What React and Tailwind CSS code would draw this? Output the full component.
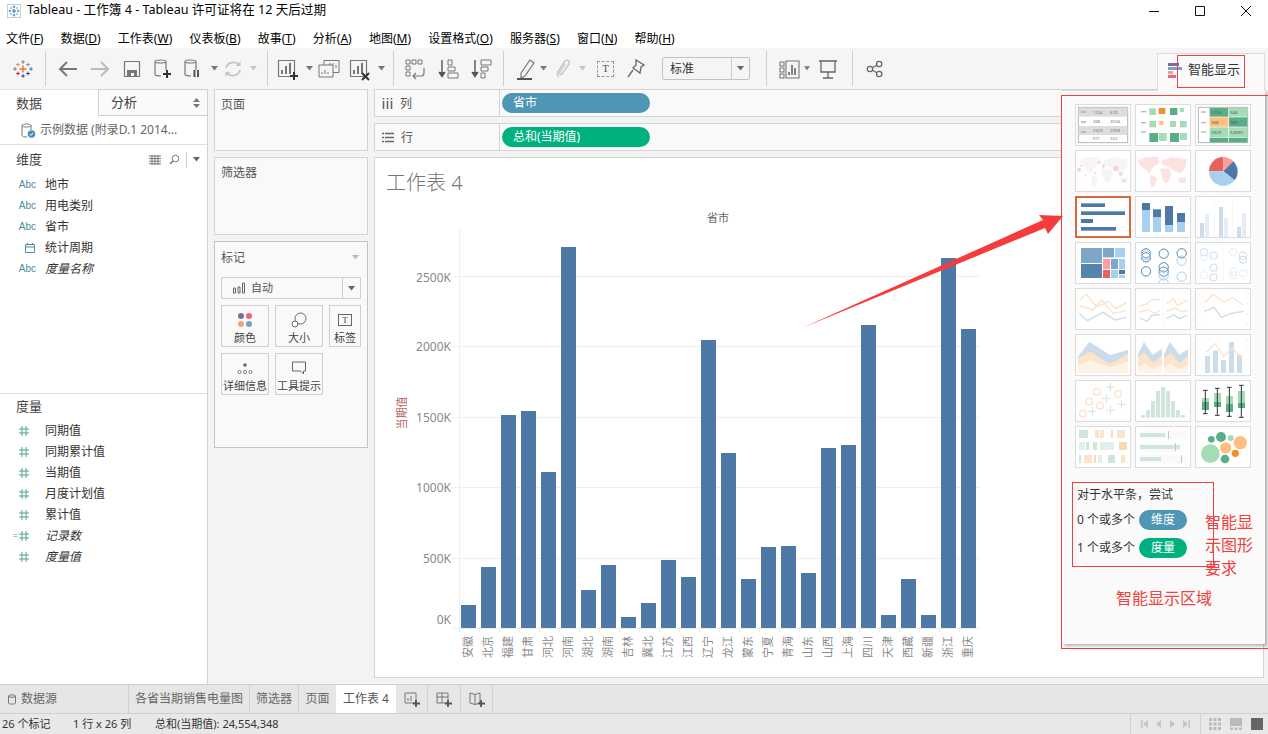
import React from 'react';

const MENUS = [['文件', 'F'], ['数据', 'D'], ['工作表', 'W'], ['仪表板', 'B'], ['故事', 'T'], ['分析', 'A'], ['地图', 'M'], ['设置格式', 'O'], ['服务器', 'S'], ['窗口', 'N'], ['帮助', 'H']];
const DIMS = [['abc', '地市'], ['abc', '用电类别'], ['abc', '省市'], ['cal', '统计周期'], ['abc', '度量名称', true]];
const MEAS = [['同期值'], ['同期累计值'], ['当期值'], ['月度计划值'], ['累计值'], ['记录数', true, true], ['度量值', true]];
const BARS = [['安徽', 605], ['北京', 567], ['福建', 415], ['甘肃', 411], ['河北', 472], ['河南', 247], ['湖北', 590], ['湖南', 565], ['吉林', 617], ['冀北', 603], ['江苏', 560], ['江西', 577], ['辽宁', 340], ['龙江', 453], ['蒙东', 579], ['宁夏', 547], ['青海', 546], ['山东', 573], ['山西', 448], ['上海', 445], ['四川', 325], ['天津', 615], ['西藏', 579], ['新疆', 615], ['浙江', 258], ['重庆', 329]];
const TICKS = [['2500K', 276, 278], ['2000K', 346, 347], ['1500K', 417, 418], ['1000K', 487, 488], ['500K', 558, 559], ['0K', 628, 620]];

const BLUE = '#4e79a7', SKY = '#a7cfef', DK = '#59ae8a', LT = '#a3dcb5', OR = '#ffbf7f', PO = '#fde3c9', PB = '#cddcea', PG = '#cfe6da';

const Rect = ({ r, f }) => <rect x={r[0]} y={r[1]} width={r[2] - r[0]} height={r[3] - r[1]} fill={f} />;
const Line = ({ p, c, w = 4 }) => <polyline points={p} fill="none" stroke={c} strokeWidth={w} />;
const World = ({ f, x = 0 }) => (
  <g fill={f} transform={`translate(${x},0)`}>
    <polygon points="58,482 80,472 118,470 122,488 100,505 92,522 78,508 64,496" />
    <polygon points="94,524 116,534 108,556 98,566 95,545" />
    <polygon points="128,482 160,472 205,478 200,505 185,520 165,512 150,500 132,495" />
    <polygon points="124,505 152,506 158,522 148,548 136,548 128,526" />
    <polygon points="178,534 200,532 204,548 184,550" />
  </g>
);

// drawn in the 3x crop's pixels, so the numbers read straight off the reference
const THUMBS = [
  <g key="0">
    <rect x="55" y="322" width="148" height="106" fill="#fff" stroke="#b5b5b5" strokeWidth="3" />
    <Rect r={[56, 323, 202, 350]} f="#dddddd" /><Rect r={[56, 378, 202, 405]} f="#dddddd" />
    <g fill="#a8a8a8"><rect x="63" y="334" width="15" height="4" /><rect x="63" y="364" width="15" height="4" /><rect x="63" y="394" width="15" height="4" /></g>
    <g fontSize="13" fill="#777"><text x="98" y="343">1234</text><text x="150" y="343">678</text><text x="98" y="370">368</text><text x="150" y="370">3034</text><text x="98" y="397">2929</text><text x="150" y="397">2958</text><text x="98" y="420">971</text><text x="150" y="420">322</text></g>
  </g>,
  <g key="1">
    <g fill="#b5b5b5"><rect x="243" y="333" width="15" height="4" /><rect x="243" y="366" width="15" height="4" /><rect x="243" y="394" width="15" height="4" /></g>
    <Rect r={[268, 325, 288, 345]} f={LT} /><Rect r={[296, 324, 316, 342]} f="#f28e2b" /><Rect r={[330, 324, 352, 345]} f={DK} /><Rect r={[360, 324, 372, 336]} f={LT} />
    <Rect r={[268, 363, 288, 382]} f={LT} /><Rect r={[298, 363, 310, 375]} f={OR} /><Rect r={[330, 363, 348, 381]} f={LT} /><Rect r={[360, 363, 380, 382]} f={LT} />
    <Rect r={[268, 399, 294, 426]} f={DK} /><Rect r={[297, 399, 320, 423]} f={LT} /><Rect r={[330, 399, 357, 426]} f={DK} /><Rect r={[360, 399, 381, 420]} f={LT} />
  </g>,
  <g key="2">
    <rect x="415" y="322" width="148" height="106" fill="#fff" stroke="#b5b5b5" strokeWidth="3" />
    <g fill="#b5b5b5"><rect x="423" y="334" width="15" height="4" /><rect x="423" y="366" width="15" height="4" /><rect x="423" y="394" width="15" height="4" /></g>
    <Rect r={[449, 324, 505, 350]} f={DK} /><Rect r={[507, 324, 562, 350]} f={LT} /><Rect r={[449, 352, 505, 380]} f={OR} /><Rect r={[507, 352, 562, 380]} f={DK} />
    <Rect r={[449, 382, 505, 411]} f={LT} /><Rect r={[507, 382, 562, 411]} f={LT} /><Rect r={[449, 413, 505, 427]} f={DK} /><Rect r={[507, 413, 562, 427]} f={DK} />
    <g fontSize="13" fill="#555"><text x="453" y="342">1234</text><text x="511" y="342">546</text><text x="453" y="371">368</text><text x="511" y="371">380</text><text x="453" y="401">2929</text><text x="511" y="401">52690</text></g>
  </g>,
  <g key="3">
    <World f="#f5f5f5" />
    <g fill="#f7d3d3"><circle cx="57" cy="509" r="6" /><circle cx="130" cy="498" r="5" /><circle cx="167" cy="505" r="8" /><circle cx="182" cy="522" r="6" /><circle cx="118" cy="487" r="4" /><circle cx="76" cy="527" r="3" /><circle cx="192" cy="542" r="4" /><circle cx="62" cy="497" r="3" /><circle cx="105" cy="520" r="3" /></g>
  </g>,
  <g key="4"><World f="#fde2e2" x="176" /></g>,
  <g key="5">
    <path d="M490 514 L447 514 A43 43 0 0 1 490 471 Z" fill="#e4635a" />
    <path d="M490 514 L490 471 A43 43 0 0 1 520 484 Z" fill="#ff9d9a" />
    <path d="M490 514 L520 484 A43 43 0 0 1 524 541 Z" fill={BLUE} />
    <path d="M490 514 L524 541 A43 43 0 0 1 447 514 Z" fill={SKY} />
  </g>,
  <g key="6" fill={BLUE}><rect x="63" y="610" width="72" height="11" /><rect x="63" y="634" width="132" height="11" /><rect x="63" y="657" width="36" height="12" /><rect x="63" y="681" width="105" height="11" /></g>,
  <g key="7">
    <Rect r={[246, 609, 270, 630]} f={BLUE} /><Rect r={[246, 630, 270, 696]} f={SKY} /><Rect r={[279, 628, 303, 651]} f={BLUE} /><Rect r={[279, 651, 303, 696]} f={SKY} />
    <Rect r={[315, 618, 339, 675]} f={BLUE} /><Rect r={[315, 675, 339, 696]} f={SKY} /><Rect r={[351, 639, 375, 666]} f={BLUE} /><Rect r={[351, 666, 375, 696]} f={SKY} />
  </g>,
  <g key="8">
    <Rect r={[463, 592, 464, 710]} f="#e8e8e8" /><Rect r={[517, 592, 518, 710]} f="#e8e8e8" />
    <Rect r={[420, 669, 432, 711]} f={PB} /><Rect r={[435, 642, 447, 711]} f="#e3eef8" /><Rect r={[477, 621, 489, 711]} f={PB} /><Rect r={[492, 654, 504, 711]} f="#e3eef8" /><Rect r={[531, 681, 543, 711]} f={PB} /><Rect r={[546, 639, 558, 711]} f="#e3eef8" />
  </g>,
  <g key="9">
    <Rect r={[63, 744, 126, 789]} f="#7da6c8" /><Rect r={[129, 744, 162, 772]} f="#7da6c8" /><Rect r={[165, 744, 195, 772]} f={SKY} /><Rect r={[63, 792, 126, 834]} f="#5585ae" />
    <Rect r={[129, 777, 150, 807]} f="#ff9d9a" /><Rect r={[153, 777, 174, 807]} f="#7da6c8" /><Rect r={[177, 777, 195, 807]} f={SKY} /><Rect r={[129, 810, 150, 834]} f="#e4635a" />
    <Rect r={[153, 810, 174, 834]} f={SKY} /><Rect r={[177, 810, 195, 822]} f={BLUE} /><Rect r={[177, 825, 195, 834]} f={SKY} />
  </g>,
  <g key="10" fill="none" strokeWidth="3">
    <g stroke="#5585ae"><circle cx="258" cy="760" r="14" /><circle cx="258" cy="772" r="14" /><circle cx="311" cy="761" r="14" /><circle cx="365" cy="760" r="14" /><circle cx="258" cy="814" r="14" /><circle cx="311" cy="802" r="14" /><circle cx="311" cy="815" r="14" /></g>
    <g stroke={SKY}><circle cx="258" cy="766" r="14" /><circle cx="365" cy="782" r="14" /><circle cx="311" cy="826" r="14" /><circle cx="365" cy="830" r="14" /><circle cx="311" cy="850" r="14" /></g>
  </g>,
  <g key="11" fill="none" strokeWidth="3">
    <Rect r={[490, 730, 491, 850]} f="#eeeeee" />
    <g stroke="#cddcea"><circle cx="432" cy="757" r="11" /><circle cx="461" cy="767" r="11" /><circle cx="461" cy="803" r="11" /><circle cx="461" cy="832" r="11" /><circle cx="549" cy="767" r="11" /><circle cx="549" cy="779" r="11" /></g>
    <g stroke="#e3eef8"><circle cx="432" cy="770" r="11" /><circle cx="432" cy="826" r="11" /><circle cx="520" cy="757" r="11" /><circle cx="520" cy="814" r="11" /><circle cx="520" cy="826" r="11" /><circle cx="549" cy="820" r="11" /></g>
  </g>,
  <g key="12">
    <Line p="60,60 78,42 110,80 145,65 168,85 200,68" c={PO} /><Line p="60,78 100,90 125,60 160,100 198,92" c={PO} /><Line p="58,100 82,122 130,97 165,120 200,112" c={PB} />
  </g>,
  <g key="13">
    <Rect r={[310, 26, 311, 148]} f="#eeeeee" />
    <Line p="238,78 262,72 275,58 300,60" c={PO} /><Line p="238,96 262,90 285,100 300,92" c={PO} /><Line p="238,114 262,124 275,106 300,104" c={PB} />
    <Line p="320,72 340,56 352,76 382,60" c={PO} /><Line p="320,94 345,84 365,96 382,90" c={PO} /><Line p="320,116 340,104 358,116 382,106" c={PB} />
  </g>,
  <g key="14">
    <g fill="#eeeeee"><rect x="414" y="40" width="10" height="3" /><rect x="414" y="70" width="10" height="3" /><rect x="414" y="100" width="10" height="3" /><rect x="414" y="130" width="10" height="3" /><rect x="558" y="40" width="10" height="3" /><rect x="558" y="70" width="10" height="3" /><rect x="558" y="100" width="10" height="3" /><rect x="558" y="130" width="10" height="3" /></g>
    <Line p="433,68 460,43 490,66 518,53 550,76" c={PO} /><Line p="433,94 462,82 484,112 515,100 550,94" c={PB} />
  </g>,
  <g key="15">
    <polygon points="54,230 88,185 150,225 204,210 204,279 54,279" fill={PB} />
    <polygon points="54,235 90,215 150,252 204,222 204,279 54,279" fill="#fde3c9" />
    <polygon points="54,256 90,240 150,262 204,245 204,279 54,279" fill="#fef3e6" />
  </g>,
  <g key="16">
    <polygon points="234,222 252,186 278,224 306,206 306,279 234,279" fill={PB} /><polygon points="312,222 330,186 358,224 384,208 384,279 312,279" fill={PB} />
    <polygon points="234,232 254,218 280,250 306,226 306,279 234,279" fill="#fde3c9" /><polygon points="312,234 332,218 358,250 384,228 384,279 312,279" fill="#fde3c9" />
    <polygon points="234,262 254,250 280,268 306,252 306,279 234,279" fill="#fef3e6" /><polygon points="312,262 332,250 358,268 384,254 384,279 312,279" fill="#fef3e6" />
  </g>,
  <g key="17">
    <g fill="#eeeeee"><rect x="414" y="178" width="10" height="3" /><rect x="414" y="208" width="10" height="3" /><rect x="414" y="238" width="10" height="3" /><rect x="558" y="178" width="10" height="3" /><rect x="558" y="208" width="10" height="3" /><rect x="558" y="238" width="10" height="3" /></g>
    <Rect r={[435, 228, 450, 279]} f={PB} /><Rect r={[459, 212, 474, 279]} f={PB} /><Rect r={[483, 240, 498, 279]} f={PB} /><Rect r={[507, 186, 522, 279]} f={PB} /><Rect r={[531, 225, 546, 279]} f={PB} />
    <Line p="438,217 466,191 492,230 516,204 544,232" c={PO} />
  </g>,
  <g key="18">
    <g fill="none" stroke={PO} strokeWidth="4"><circle cx="111" cy="335" r="10" /><circle cx="87" cy="365" r="10" /><circle cx="120" cy="377" r="10" /><circle cx="69" cy="401" r="10" /><circle cx="174" cy="342" r="10" /></g>
    <g stroke={PG} strokeWidth="3"><path d="M138 321h26M151 308v26M126 355h26M139 342v26M171 373h26M184 360v26M84 394h26M97 381v26M138 390h26M151 377v26" /></g>
  </g>,
  <g key="19" fill={PG}>
    <Rect r={[243, 405, 255, 413]} /><Rect r={[258, 390, 270, 413]} /><Rect r={[273, 363, 285, 413]} /><Rect r={[288, 333, 300, 413]} /><Rect r={[303, 321, 315, 413]} /><Rect r={[318, 333, 330, 413]} /><Rect r={[333, 363, 345, 413]} /><Rect r={[348, 390, 360, 413]} /><Rect r={[363, 405, 375, 413]} />
  </g>,
  <g key="20">
    <Rect r={[426, 354, 447, 366]} f={LT} /><Rect r={[426, 366, 447, 390]} f={DK} /><Rect r={[462, 339, 483, 366]} f={LT} /><Rect r={[462, 366, 483, 381]} f={DK} />
    <Rect r={[498, 348, 519, 372]} f={LT} /><Rect r={[498, 372, 519, 396]} f={DK} /><Rect r={[534, 333, 555, 369]} f={LT} /><Rect r={[534, 369, 555, 384]} f={DK} />
    <path d="M436 331v70M429 331h14M429 401h14M472 325v81M465 325h14M465 406h14M508 322v87M501 322h14M501 409h14M544 316v96M537 316h14M537 412h14" stroke="#333" strokeWidth="3" fill="none" />
  </g>,
  <g key="21">
    <Rect r={[57, 450, 84, 474]} f={PG} /><Rect r={[105, 450, 117, 474]} f="#fde3c9" /><Rect r={[120, 450, 132, 474]} f="#fde3c9" /><Rect r={[153, 450, 159, 474]} f="#fcd9b6" /><Rect r={[171, 450, 195, 474]} f="#fde3c9" />
    <Rect r={[57, 486, 75, 510]} f="#e1f0e8" /><Rect r={[78, 486, 87, 510]} f={PG} /><Rect r={[99, 486, 111, 510]} f={PG} /><Rect r={[120, 486, 162, 510]} f="#e1f0e8" /><Rect r={[177, 486, 201, 510]} f="#fcd9b6" />
    <Rect r={[57, 525, 63, 549]} f={PG} /><Rect r={[72, 525, 96, 549]} f="#fde3c9" /><Rect r={[102, 525, 108, 549]} f="#fcd9b6" /><Rect r={[114, 525, 126, 549]} f="#e1f0e8" /><Rect r={[144, 525, 165, 549]} f={PG} /><Rect r={[183, 525, 195, 549]} f="#fde3c9" />
  </g>,
  <g key="22">
    <Rect r={[240, 453, 378, 477]} f="#fafafa" /><Rect r={[240, 492, 378, 516]} f="#fafafa" /><Rect r={[240, 525, 378, 549]} f="#fafafa" />
    <Rect r={[240, 459, 315, 471]} f={PG} /><Rect r={[240, 495, 360, 507]} f={PG} /><Rect r={[240, 531, 303, 543]} f={PG} />
    <Rect r={[324, 453, 327, 477]} f="#c4c4c4" /><Rect r={[345, 489, 348, 513]} f="#c4c4c4" /><Rect r={[363, 525, 366, 549]} f="#c4c4c4" />
  </g>,
  <g key="23">
    <circle cx="451" cy="521" r="28" fill={LT} /><circle cx="483" cy="471" r="15" fill={DK} /><circle cx="454" cy="478" r="10" fill={DK} /><circle cx="512" cy="474" r="9" fill={LT} />
    <circle cx="541" cy="488" r="20" fill={OR} /><circle cx="497" cy="504" r="17" fill={OR} /><circle cx="526" cy="520" r="11" fill="#f28e2b" /><circle cx="495" cy="537" r="13" fill={DK} />
  </g>,
];

const Thumb = ({ i }) => {
  const col = i % 3, row = Math.floor(i / 3);
  // rows past the fourth were measured on a crop that starts 280px lower
  const shift = row >= 4 ? 840 : 0;
  const x0 = (15 + col * 60) * 3 + 3, y0 = (104 + row * 46) * 3 + 3 - shift;
  return (
    <div className={`w-[56px] h-[42px] bg-white flex items-center justify-center overflow-hidden ${i === 6 ? 'border-2 border-[#d9693a]' : 'border border-[#dcdcdc]'}`}>
      <svg width="54" height="40" viewBox={`${x0} ${y0} 162 120`} className="shrink-0">{THUMBS[i]}</svg>
    </div>
  );
};

const Tool = ({ w, children }) => <div className="flex items-center justify-center h-full shrink-0" style={{ width: w }}>{children}</div>;
const Sep = () => <div className="w-px h-[35px] bg-[#cfcfcf] shrink-0" />;
const Gap = ({ w }) => <div className="shrink-0" style={{ width: w }} />;
const Drop = ({ c = '#777' }) => <svg width="7" height="5" viewBox="0 0 7 5"><path d="M0 0h7L3.5 4.5z" fill={c} /></svg>;

const Cyl = ({ c = '#777' }) => <path d="M3 4.5C3 2.5 14 2.5 14 4.5V13M3 4.5C3 6.5 14 6.5 14 4.5M3 4.5V17C3 18.5 6 19 9 19" fill="none" stroke={c} strokeWidth="1.2" />;
const BarsBox = () => <><path d="M2.5 3.5h16v16h-16z" fill="none" stroke="#777" strokeWidth="1.2" /><path d="M6 17v-4M10 17V9M14 17V6" stroke="#777" strokeWidth="2" /></>;

const Ico = ({ children, s = 24 }) => <svg width={s} height={s} viewBox="0 0 24 24">{children}</svg>;

const Cross = ({ x, y, r, c, w = 1 }) => <path d={`M${x - r} ${y}h${r * 2}M${x} ${y - r}v${r * 2}`} stroke={c} strokeWidth={w} />;
const TableauLogo = () => (
  <svg width="20" height="20" viewBox="0 0 20 20">
    <Cross x={10} y={10} r={3.5} c="#e8762c" w={1.4} />
    <Cross x={10} y={3} r={1.8} c="#5b879b" /><Cross x={10} y={17} r={1.8} c="#1f447e" />
    <Cross x={5} y={5.5} r={1.8} c="#eb912b" /><Cross x={15} y={5.5} r={1.8} c="#7099a6" />
    <Cross x={5} y={14.5} r={1.8} c="#c72035" /><Cross x={15} y={14.5} r={1.8} c="#1f447e" />
    <Cross x={2} y={10} r={1.8} c="#59879b" /><Cross x={18} y={10} r={1.8} c="#5b6591" />
  </svg>
);

const Hash = () => <svg width="12" height="12" viewBox="0 0 12 12"><path d="M4 1v10M8 1v10M1 4h10M1 8h10" stroke="#4ea58a" strokeWidth="1" fill="none" /></svg>;
const Cal = () => <svg width="12" height="12" viewBox="0 0 12 12"><path d="M1.5 2.5h9v8h-9zM1.5 5h9M3.5 1v2M8.5 1v2" stroke="#4e8aa6" strokeWidth="1" fill="none" /></svg>;

const Pill = ({ c, children }) => <div className={`w-[148px] h-[20px] rounded-full flex items-center pl-[11px] text-white text-[12px] ${c}`}>{children}</div>;

const Shelf = ({ icon, label, children }) => (
  <div className="h-[28px] flex items-center border border-[#d4d4d4] bg-[#f9f9f9]">
    <div className="w-[125px] h-full flex items-center gap-[7px] pl-[7px] pt-[1px] border-r border-[#d4d4d4] text-[12px] text-[#555] shrink-0">{icon}{label}</div>
    <div className="pl-[2px]">{children}</div>
  </div>
);

const MarkBtn = ({ w, icon, label }) => (
  <div className={`${w} h-[42px] border border-[#cfcfcf] flex flex-col items-center pt-[4px] text-[11px] leading-[16px] text-[#444] whitespace-nowrap`}>
    <div className="h-[20px] flex items-center">{icon}</div>{label}
  </div>
);

export default function App() {
  return (
    <div className="relative w-[1268px] h-[734px] overflow-hidden flex flex-col bg-white text-[#333] font-['Noto_Sans','Noto_Sans_CJK_SC',sans-serif]">
      {/* title bar */}
      <div className="h-[21px] flex items-center pl-[7px] text-[12.6px] text-black shrink-0">
        <div className="w-[14px] h-[14px] border border-[#ccc] flex items-center justify-center mr-[6px]">
          <svg width="12" height="12" viewBox="0 0 20 20"><Cross x={10} y={10} r={3.5} c="#2f7fb5" w={2} /><Cross x={10} y={3} r={2} c="#4f9ac9" w={2} /><Cross x={10} y={17} r={2} c="#4f9ac9" w={2} /><Cross x={3} y={10} r={2} c="#4f9ac9" w={2} /><Cross x={17} y={10} r={2} c="#4f9ac9" w={2} /><Cross x={5} y={5} r={1.5} c="#86bcdc" w={2} /><Cross x={15} y={5} r={1.5} c="#86bcdc" w={2} /><Cross x={5} y={15} r={1.5} c="#86bcdc" w={2} /><Cross x={15} y={15} r={1.5} c="#86bcdc" w={2} /></svg>
        </div>
        <span>Tableau - 工作簿 4 - Tableau 许可证将在 12 天后过期</span>
        <div className="ml-auto flex items-center pr-[16px] gap-[34px]">
          <svg width="12" height="12" viewBox="0 0 12 12"><path d="M1 6.5h10" stroke="#111" strokeWidth="1" /></svg>
          <svg width="12" height="12" viewBox="0 0 12 12"><path d="M1.5 1.5h9v9h-9z" stroke="#111" strokeWidth="1" fill="none" /></svg>
          <svg width="12" height="12" viewBox="0 0 12 12"><path d="M1 1l10 10M11 1L1 11" stroke="#111" strokeWidth="1" fill="none" /></svg>
        </div>
      </div>

      {/* menu */}
      <div className="h-[27px] flex items-center pt-[9px] pl-[6px] gap-[17.2px] text-[12px] text-black shrink-0">
        {MENUS.map(([n, k]) => <span key={k}>{n}(<u>{k}</u>)</span>)}
      </div>

      {/* toolbar */}
      <div className="h-[41px] flex items-center bg-[#f5f5f5] shrink-0">
        <Tool w={45}><TableauLogo /></Tool><Sep /><Gap w={6} />
        <Tool w={32}><Ico><path d="M21 12H4M11 5l-7 7 7 7" fill="none" stroke="#777" strokeWidth="2" /></Ico></Tool>
        <Tool w={32}><Ico><path d="M3 12h17M13 5l7 7-7 7" fill="none" stroke="#bbb" strokeWidth="2" /></Ico></Tool>
        <Tool w={32}><Ico><path d="M4.500 4.500h15v15h-15z" fill="none" stroke="#777" strokeWidth="1.2" /><path d="M7 19v-6h10v6h-3v-3h-3v3z" fill="#777" /></Ico></Tool>
        <Tool w={32}><Ico><Cyl /><path d="M15 13v8M11 17h8" stroke="#333" strokeWidth="2" /></Ico></Tool>
        <Tool w={28}><Ico><Cyl /><path d="M12.500 13v7M16 13v7" stroke="#555" strokeWidth="2" /></Ico></Tool>
        <Tool w={12}><Drop /></Tool>
        <Tool w={26}><Ico><path d="M5 11a7.500 7.500 0 0 1 13-3M19 13a7.500 7.500 0 0 1-13 3" fill="none" stroke="#c4c4c4" strokeWidth="1.8" /><path d="M19.500 4v5h-5zM4.500 20v-5h5z" fill="#c4c4c4" /></Ico></Tool>
        <Tool w={14}><Drop c="#c4c4c4" /></Tool><Gap w={7} /><Sep /><Gap w={4} />
        <Tool w={32}><Ico><BarsBox /><path d="M18 15v8M14 19h8" stroke="#333" strokeWidth="2" /></Ico></Tool>
        <Tool w={10}><Drop /></Tool>
        <Tool w={30}><Ico><path d="M7 3.500h15v12H7z" fill="none" stroke="#777" strokeWidth="1" /><path d="M2 8h14v12H2z" fill="#f5f5f5" stroke="#777" strokeWidth="1" /><path d="M5 17v-2M8 17v-4M11 17v-2M13 6v2M16 6v2M19 8v3" stroke="#777" strokeWidth="1" /></Ico></Tool>
        <Tool w={32}><Ico><BarsBox /><path d="M14 16l7 7M21 16l-7 7" stroke="#333" strokeWidth="2" /></Ico></Tool>
        <Tool w={10}><Drop /></Tool><Gap w={7} /><Sep /><Gap w={5} />
        <Tool w={32}><Ico><path d="M3 3h4v4H3zM9 3h4v4H9zM15 3h4v4h-4zM3 9h4v4H3zM3 15h4v4H3z" fill="none" stroke="#777" strokeWidth="1" /><path d="M21 11v5a3 3 0 0 1-3 3h-7M13 16l-3 3 3 3" fill="none" stroke="#777" strokeWidth="1.2" /></Ico></Tool>
        <Tool w={34}><Ico><path d="M6 3v16M3 15l3 4.500L9 15" fill="#555" stroke="#555" strokeWidth="1.4" /><path d="M12 3h4v5h-4zM12 10h7v4h-7zM12 16h10v5H12z" fill="none" stroke="#777" strokeWidth="1" /></Ico></Tool>
        <Tool w={32}><Ico><path d="M6 3v16M3 15l3 4.500L9 15" fill="#555" stroke="#555" strokeWidth="1.4" /><path d="M12 3h10v5H12zM12 10h7v4h-7zM12 16h4v5h-4z" fill="none" stroke="#777" strokeWidth="1" /></Ico></Tool>
        <Gap w={6} /><Sep /><Gap w={9} />
        <Tool w={26}><Ico><path d="M7 16L16 3l4 3-9 13-4 2z" fill="none" stroke="#777" strokeWidth="1.2" /><path d="M3 22h15" stroke="#555" strokeWidth="2" /></Ico></Tool>
        <Tool w={8}><Drop /></Tool><Gap w={3} />
        <Tool w={26}><Ico><path d="M8 20c-3-2-1-5 0-7l6-9c2-2 5 0 4 3l-7 10c-1 1-3 0-2-2l5-8" fill="none" stroke="#c4c4c4" strokeWidth="1.4" /></Ico></Tool>
        <Tool w={12}><Drop c="#c4c4c4" /></Tool><Gap w={2} />
        <Tool w={31}><div className="w-[17px] h-[16px] border border-dashed border-[#999] flex items-center justify-center text-[11px] leading-none font-['Liberation_Serif',serif] text-[#555]">T</div></Tool>
        <Tool w={28}><Ico><path d="M13 3l8 5-3 2-1 6-7-5 3-3zM10 13l-5 7" fill="none" stroke="#666" strokeWidth="1.3" /></Ico></Tool>
        <Gap w={13} />
        <div className="w-[88px] h-[23px] border border-[#c4c4c4] rounded-[2px] flex items-center pl-[7px] text-[12px] shrink-0">
          <span className="flex-1">标准</span>
          <div className="w-[18px] h-full border-l border-[#ccc] flex items-center justify-center"><Drop c="#666" /></div>
        </div>
        <Gap w={16} /><Sep /><Gap w={7} />
        <Tool w={30}><Ico><path d="M3 5h4v4H3zM3 11h4v4H3zM3 17h4v4H3zM9 4h13v17H9z" fill="none" stroke="#777" strokeWidth="1.1" /><path d="M12 18v-3M15 18V8M18 18v-7" stroke="#666" strokeWidth="1.6" /></Ico></Tool>
        <Tool w={6}><Drop /></Tool><Gap w={2} />
        <Tool w={32}><Ico><path d="M3 4h18M5 4v11h14V4M12 15v6M7 21h10" fill="none" stroke="#666" strokeWidth="1.3" /></Ico></Tool>
        <Gap w={8} /><Sep /><Gap w={7} />
        <Tool w={30}><Ico s={20}><g fill="none" stroke="#666" strokeWidth="1.5"><circle cx="6" cy="12" r="3.2" /><circle cx="17" cy="6" r="3.2" /><circle cx="17" cy="18" r="3.2" /><path d="M9 10.500l5-3M9 13.500l5 3" /></g></Ico></Tool>
      </div>

      {/* main */}
      <div className="flex-1 min-h-0 flex bg-[#f3f3f3]">
        {/* data pane */}
        <div className="w-[208px] shrink-0 bg-white border-r border-[#d0d0d0] flex flex-col">
          <div className="h-[27px] flex text-[13px] text-[#444] shrink-0">
            <div className="w-[98px] flex items-center pl-[16px] pt-[1px] border-t border-[#e6e6e6]">数据</div>
            <div className="flex-1 flex items-center pl-[12px] border-l border-b border-t border-[#cfcfcf] bg-[#fafafa]">
              <span className="flex-1">分析</span>
              <svg width="7" height="10" viewBox="0 0 7 10" className="mr-[7px]"><path d="M0 4L3.500 0 7 4zM0 6l3.500 4L7 6z" fill="#777" /></svg>
            </div>
          </div>
          <div className="h-[29px] flex items-center pl-[20px] gap-[3px] border-b border-[#e0e0e0] text-[12px] text-[#666] shrink-0 whitespace-nowrap">
            <svg width="17" height="17" viewBox="0 0 17 17"><path d="M2 3.500C2 1.500 11 1.500 11 3.500V8M2 3.500C2 5.500 11 5.500 11 3.500M2 3.500V13C2 14.500 4 15 7 15" fill="none" stroke="#777" strokeWidth="1" /><circle cx="11.500" cy="12" r="3.800" fill="#4e8fb5" /><path d="M9.800 12l1.300 1.300 2-2.400" fill="none" stroke="#fff" strokeWidth="1" /></svg>
            示例数据 (附录D.1 2014...
          </div>
          <div className="flex items-center h-[28px] pl-[16px] pr-[7px] pt-[1px] text-[13px] text-[#444] shrink-0">
            <span className="flex-1">维度</span>
            <svg width="12" height="10" viewBox="0 0 12 10" className="mr-[8px]"><path d="M0 1h12M0 3.600h12M0 6.200h12M0 8.800h12M3 0v10M6 0v10M9 0v10" stroke="#777" strokeWidth="1" /></svg>
            <svg width="11" height="11" viewBox="0 0 11 11" className="mr-[6px]"><circle cx="6.500" cy="4.500" r="3.300" fill="none" stroke="#777" /><path d="M4 7L1 10" stroke="#777" strokeWidth="1.4" /></svg>
            <div className="w-px h-[16px] bg-[#ccc] mr-[6px]" /><Drop c="#666" />
          </div>
          <div className="h-[221px] border-b border-[#e0e0e0] shrink-0 pt-[1px]">
            {DIMS.map(([t, n, it]) => (
              <div key={n} className="h-[21px] flex items-center text-[12px] text-[#333]">
                <div className="w-[45px] flex justify-end pr-[9px]">
                  {t === 'abc' ? <span className="text-[10px] text-[#4e8aa6] font-['Liberation_Sans',sans-serif]">Abc</span> : <Cal />}
                </div>
                <span className={it ? 'italic' : ''}>{n}</span>
              </div>
            ))}
          </div>
          <div className="h-[25px] flex items-center pl-[16px] text-[13px] text-[#444] shrink-0">度量</div>
          <div className="pt-[1px]">
            {MEAS.map(([n, it, calc]) => (
              <div key={n} className="h-[21px] flex items-center text-[12px] text-[#333]">
                <div className="w-[45px] flex justify-end items-center pr-[15px]">
                  {calc && <span className="text-[9px] leading-none text-[#4ea58a]">=</span>}<Hash />
                </div>
                <span className={it ? 'italic' : ''}>{n}</span>
              </div>
            ))}
          </div>
        </div>

        {/* cards column */}
        <div className="w-[154px] shrink-0 ml-[6px] flex flex-col gap-[6px] text-[12px] text-[#555]">
          <div className="h-[62px] border border-[#d4d4d4] bg-[#f9f9f9] px-[6px] py-[6px]">页面</div>
          <div className="h-[78px] border border-[#d4d4d4] bg-[#f9f9f9] px-[6px] py-[6px]">筛选器</div>
          <div className="h-[207px] border border-[#c4c4c4] bg-[#f9f9f9] px-[6px] flex flex-col">
            <div className="h-[31px] flex items-center justify-between pr-[2px]"><span className="text-[12px]">标记</span><Drop c="#bbb" /></div>
            <div className="h-[22px] mt-[4px] border border-[#cfcfcf] flex items-center">
              <svg width="14" height="12" viewBox="0 0 14 12" className="ml-[10px] mr-[5px]"><path d="M1.500 6h2v5h-2zM6 5h2v6H6zM10.500 1h2v10h-2z" fill="none" stroke="#666" strokeWidth="1" /></svg>
              <span className="flex-1 text-[11px]">自动</span>
              <div className="w-[18px] h-full border-l border-[#ccc] flex items-center justify-center"><Drop c="#666" /></div>
            </div>
            <div className="flex gap-[6px] mt-[6px]">
              <MarkBtn w="w-[48px]" label="颜色" icon={<svg width="16" height="16" viewBox="0 0 16 16"><circle cx="4" cy="4" r="3" fill="#7b6b9d" /><circle cx="12" cy="4" r="3" fill="#f0627d" /><circle cx="4" cy="12" r="3" fill="#efa57c" /><circle cx="12" cy="12" r="3" fill="#7aa0cf" /></svg>} />
              <MarkBtn w="w-[48px]" label="大小" icon={<svg width="16" height="16" viewBox="0 0 16 16" fill="none" stroke="#666"><circle cx="9.500" cy="6.500" r="5.500" /><circle cx="4" cy="12" r="3" fill="#f9f9f9" /></svg>} />
              <MarkBtn w="w-[32px]" label="标签" icon={<div className="w-[14px] h-[12px] border border-[#666] flex items-center justify-center text-[9px] leading-none font-['Liberation_Serif',serif]">T</div>} />
            </div>
            <div className="flex gap-[6px] mt-[6px]">
              <MarkBtn w="w-[48px]" label="详细信息" icon={<svg width="16" height="16" viewBox="0 0 16 16"><circle cx="8" cy="5" r="1.800" fill="#666" /><g fill="none" stroke="#666" strokeWidth=".8"><circle cx="2.500" cy="12" r="1.600" /><circle cx="8" cy="12" r="1.600" /><circle cx="13.500" cy="12" r="1.600" /></g></svg>} />
              <MarkBtn w="w-[48px]" label="工具提示" icon={<svg width="16" height="16" viewBox="0 0 16 16"><path d="M1.500 2h13v9h-2v3l-3-3h-8z" fill="none" stroke="#666" /></svg>} />
            </div>
          </div>
        </div>

        {/* view */}
        <div className="flex-1 min-w-0 ml-[6px] mr-[4px] flex flex-col gap-[6px]">
          <Shelf label="列" icon={<svg width="11" height="11" viewBox="0 0 11 11"><path d="M1.500 3v8M5.500 3v8M9.500 3v8M1.500 0v1.500M5.500 0v1.500M9.500 0v1.500" stroke="#666" strokeWidth="1.600" /></svg>}><Pill c="bg-[#4e96b4]">省市</Pill></Shelf>
          <Shelf label="行" icon={<svg width="12" height="11" viewBox="0 0 12 11"><path d="M0 1.500h2M3 1.500h9M0 5.500h2M3 5.500h9M0 9.500h2M3 9.500h9" stroke="#666" strokeWidth="1.600" /></svg>}><Pill c="bg-[#00b180]">总和(当期值)</Pill></Shelf>
          <div className="h-[521px] border border-[#d4d4d4] bg-white flex flex-col overflow-hidden">
            <div className="h-[49px] shrink-0 pl-[11px] pt-[11px] text-[20px] leading-[28px] text-[#777] font-light">工作表 4</div>
            <svg width="888" height="470" viewBox="375 207 888 470" className="shrink-0">
              <text x="718" y="222" textAnchor="middle" fontSize="11" fill="#666" fontFamily="'Liberation Serif','Noto Sans CJK SC',serif">省市</text>
              <text transform="rotate(-90 406 413)" x="406" y="413" textAnchor="middle" fontSize="11" fill="#b5655f">当期值</text>
              <path d="M459.500 228v405" stroke="#eeeeee" />
              {TICKS.map(([t, y, ty]) => (
                <g key={t}>
                  <path d={`M452 ${y + 0.5}H980`} stroke="#eeeeee" />
                  <text x="451" y={ty + 4} textAnchor="end" fontSize="12" fill="#888">{t}</text>
                </g>
              ))}
              {BARS.map(([n, top], i) => (
                <g key={n}>
                  <rect x={461 + i * 20} y={top} width="15" height={628 - top} fill={BLUE} />
                  <path d={`M${459.5 + i * 20} 628v4`} stroke="#e6e6e6" />
                  <text transform={`rotate(-90 ${472 + i * 20} 636)`} x={472 + i * 20} y="636" textAnchor="end" fontSize="11" fill="#888">{n}</text>
                </g>
              ))}
            </svg>
          </div>
        </div>
      </div>

      {/* sheet tabs */}
      <div className="h-[30px] flex border-t border-[#d0d0d0] border-b bg-[#e6e6e6] text-[12px] text-[#666] shrink-0">
        <div className="w-[129px] flex items-center pl-[8px] gap-[5px] border-r border-[#d0d0d0]">
          <svg width="8" height="11" viewBox="0 0 8 11"><path d="M.5 2C.5.5 7.500.5 7.500 2v7c0 1.500-7 1.500-7 0z" fill="none" stroke="#777" /><path d="M.5 2.500c1 1 6 1 7 0" fill="none" stroke="#777" /></svg>数据源
        </div>
        <div className="w-[121px] flex items-center justify-center border-r border-[#d0d0d0]">各省当期销售电量图</div>
        <div className="w-[49px] flex items-center justify-center border-r border-[#d0d0d0]">筛选器</div>
        <div className="w-[37px] flex items-center justify-center">页面</div>
        <div className="w-[60px] flex items-center justify-center bg-white text-[#555]">工作表 4</div>
        <div className="w-[32px] flex items-center justify-center border-r border-[#d0d0d0]"><svg width="16" height="15" viewBox="0 0 16 15"><path d="M1 1h11v10H1z" fill="none" stroke="#777" /><path d="M4 9V6M7 9V4" stroke="#777" /><path d="M12 8v7M9 11.500h7" stroke="#555" strokeWidth="1.800" /></svg></div>
        <div className="w-[33px] flex items-center justify-center border-r border-[#d0d0d0]"><svg width="16" height="15" viewBox="0 0 16 15"><path d="M1 1h11v10H1zM1 5h11M6 1v10" fill="none" stroke="#777" /><path d="M12 8v7M9 11.500h7" stroke="#555" strokeWidth="1.800" /></svg></div>
        <div className="w-[32px] flex items-center justify-center border-r border-[#d0d0d0]"><svg width="16" height="15" viewBox="0 0 16 15"><path d="M1 1l5 1.500 5-1.500v10l-5 1.500L1 11zM6 2.500v10" fill="none" stroke="#777" /><path d="M12 8v7M9 11.500h7" stroke="#555" strokeWidth="1.800" /></svg></div>
      </div>

      {/* status bar */}
      <div className="h-[20px] flex items-center bg-[#e8e8e8] text-[11px] text-[#333] pl-[2px] shrink-0">
        <span className="w-[71px]">26 个标记</span>
        <span className="w-[82px]">1 行 x 26 列</span>
        <span>总和(当期值): 24,554,348</span>
        <div className="ml-auto h-full w-[138px] flex items-center">
          <div className="w-[71px] h-full border-l border-r border-[#d0d0d0] flex items-center justify-around px-[6px]">
            <svg width="7" height="8" viewBox="0 0 7 8"><path d="M0 0h1.500v8H0zM7 0v8L2 4z" fill="#c4c4c4" /></svg>
            <svg width="5" height="8" viewBox="0 0 5 8"><path d="M5 0v8L0 4z" fill="#c4c4c4" /></svg>
            <svg width="5" height="8" viewBox="0 0 5 8"><path d="M0 0v8l5-4z" fill="#c4c4c4" /></svg>
            <svg width="7" height="8" viewBox="0 0 7 8"><path d="M0 0v8l5-4zM5.500 0H7v8H5.500z" fill="#c4c4c4" /></svg>
          </div>
          <div className="flex-1 flex items-center pl-[8px] gap-[9px]">
            <svg width="12" height="12" viewBox="0 0 12 12" fill="#bbb"><path d="M0 0h3v3H0zM4.500 0h3v3h-3zM9 0h3v3H9zM0 4.500h3v3H0zM4.500 4.500h3v3h-3zM9 4.500h3v3H9zM0 9h3v3H0zM4.500 9h3v3h-3zM9 9h3v3H9z" /></svg>
            <svg width="12" height="12" viewBox="0 0 12 12" fill="#bbb"><path d="M0 0h12v8H0zM0 9.500h3V12H0zM4.500 9.500h3V12h-3zM9 9.500h3V12H9z" /></svg>
            <div className="w-[12px] h-[12px] bg-[#666]" />
          </div>
        </div>
      </div>

      {/* show me tab and panel, floats above the view */}
      <div className="absolute left-[1157px] top-[53px] w-[108px] h-[38px] bg-[#fafafa] border-t border-l border-r border-[#dcdcdc] flex items-center pl-[10px] pb-[5px] gap-[6px] text-[13px] text-[#333] z-10">
        <svg width="14" height="15" viewBox="0 0 14 15" className="shrink-0"><rect x="0" y="0" width="11" height="3" fill="#7b6b9d" /><rect x="0" y="4" width="14" height="3" fill="#7aa0cf" /><rect x="0" y="8" width="5" height="3" fill="#efa57c" /><rect x="0" y="12" width="8" height="3" fill="#f0627d" /></svg>
        <span>智能显示</span>
      </div>
      <div className="absolute left-[1062px] top-[90px] w-[203px] h-[554px] bg-[#fafafa] border-t border-[#dcdcdc] shadow-[2px_2px_3px_rgba(0,0,0,0.3)] pl-[13px] pt-[13px]">
        <div className="grid grid-cols-[56px_56px_56px] gap-[4px]">
          {THUMBS.map((_, i) => <Thumb key={i} i={i} />)}
        </div>
        <div className="mt-[15px] pl-[2px] text-[12px] text-[#333]">
          <div className="h-[23px] flex items-center">对于水平条，尝试</div>
          <div className="h-[28px] flex items-center gap-[4px]">0 个或多个<div className="w-[48px] h-[20px] rounded-full bg-[#4e96b4] text-white flex items-center justify-center">维度</div></div>
          <div className="h-[28px] flex items-center gap-[4px]">1 个或多个<div className="w-[48px] h-[20px] rounded-full bg-[#00b180] text-white flex items-center justify-center">度量</div></div>
        </div>
      </div>

      {/* red annotations drawn over the screenshot */}
      <div className="absolute left-[1177px] top-[55px] w-[68px] h-[33px] border border-[#f04040] z-20" />
      <div className="absolute left-[1061px] top-[95px] w-[210px] h-[554px] border border-[#f04040] z-20" />
      <div className="absolute left-[1072px] top-[482px] w-[142px] h-[85px] border border-[#f04040] z-20" />
      <div className="absolute left-[1205px] top-[511px] w-[48px] text-[16px] leading-[23px] text-[#f04040] z-20">智能显示图形要求</div>
      <div className="absolute left-[1116px] top-[587px] text-[16px] leading-[23px] text-[#f04040] z-20">智能显示区域</div>
      <svg width="280" height="130" viewBox="795 210 280 130" className="absolute left-[795px] top-[210px] z-20">
        <polygon points="802,328 1043,220 1039,215 1063,216 1048,234 1045,228" fill="#f53b3b" />
      </svg>
    </div>
  );
}
